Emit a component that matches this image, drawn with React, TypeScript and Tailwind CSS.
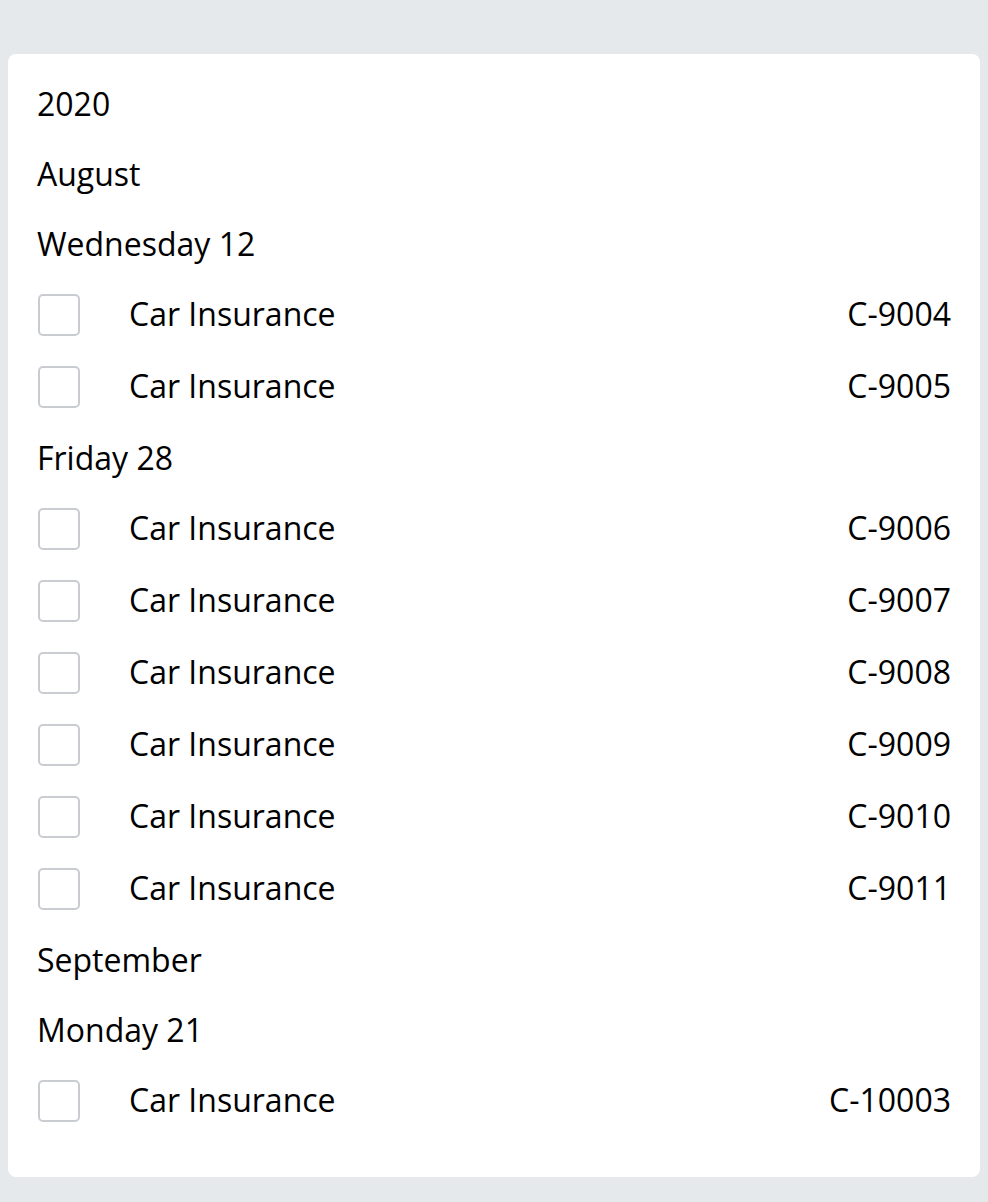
import React from 'react';

type Row =
  | { kind: 'head'; label: string }
  | { kind: 'item'; title: string; code: string };

const rows: Row[] = [
  { kind: 'head', label: '2020' },
  { kind: 'head', label: 'August' },
  { kind: 'head', label: 'Wednesday 12' },
  { kind: 'item', title: 'Car Insurance', code: 'C-9004' },
  { kind: 'item', title: 'Car Insurance', code: 'C-9005' },
  { kind: 'head', label: 'Friday 28' },
  { kind: 'item', title: 'Car Insurance', code: 'C-9006' },
  { kind: 'item', title: 'Car Insurance', code: 'C-9007' },
  { kind: 'item', title: 'Car Insurance', code: 'C-9008' },
  { kind: 'item', title: 'Car Insurance', code: 'C-9009' },
  { kind: 'item', title: 'Car Insurance', code: 'C-9010' },
  { kind: 'item', title: 'Car Insurance', code: 'C-9011' },
  { kind: 'head', label: 'September' },
  { kind: 'head', label: 'Monday 21' },
  { kind: 'item', title: 'Car Insurance', code: 'C-10003' },
];

export default function App() {
  return (
    <div
      className="min-h-[1202px] bg-[#e6e9ec] px-2 pt-[54px] pb-6 text-black"
      style={{ fontFamily: '"Open Sans", "Noto Sans", sans-serif' }}
    >
      <div className="rounded-lg bg-white pl-[29px] pr-[29px] pt-[15px] pb-[40px]">
        {rows.map((r, i) =>
          r.kind === 'head' ? (
            <div key={i} className="flex h-[70px] items-center text-[32px] leading-none">
              {r.label}
            </div>
          ) : (
            <div key={i} className="flex h-[72px] items-center text-[32px] leading-none">
              <span className="ml-px h-[42px] w-[42px] shrink-0 rounded-[5px] border-2 border-[#c9ccd1]" />
              <span className="ml-[49px] flex-1 -translate-y-px">{r.title}</span>
              <span className="-translate-y-px">{r.code}</span>
            </div>
          )
        )}
      </div>
    </div>
  );
}
